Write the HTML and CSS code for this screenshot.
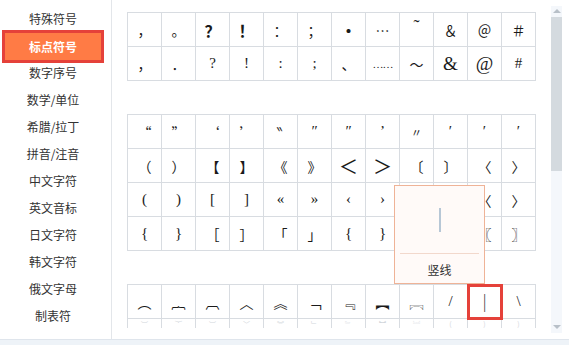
FILE: index.html
```html
<!DOCTYPE html>
<html lang="zh-CN">
<head>
<meta charset="utf-8">
<title>标点符号</title>
<link rel="stylesheet" href="styles.css">
</head>
<body>
<div class="app">
  <div class="top">
    <ul class="sidebar">
      <li class="item">特殊符号</li>
      <li class="item active">标点符号</li>
      <li class="item">数字序号</li>
      <li class="item">数学/单位</li>
      <li class="item">希腊/拉丁</li>
      <li class="item">拼音/注音</li>
      <li class="item">中文字符</li>
      <li class="item">英文音标</li>
      <li class="item">日文字符</li>
      <li class="item">韩文字符</li>
      <li class="item">俄文字母</li>
      <li class="item">制表符</li>
    </ul>
    <div class="main">
      <div class="content">
        <div class="grid">
          <span class="cell cjk">，</span><span class="cell cjk">。</span><span class="cell cjk bold">？</span><span class="cell cjk bold">！</span><span class="cell cjk">：</span><span class="cell cjk">；</span><span class="cell cjk bold">•</span><span class="cell cjk">⋯</span><span class="cell up">˜</span><span class="cell cjk">＆</span><span class="cell cjk">＠</span><span class="cell cjk">＃</span>
          <span class="cell cjk">，</span><span class="cell cjk">．</span><span class="cell">?</span><span class="cell">!</span><span class="cell">:</span><span class="cell">;</span><span class="cell cjk">、</span><span class="cell small">……</span><span class="cell cjk">～</span><span class="cell big">&amp;</span><span class="cell big">@</span><span class="cell">#</span>
        </div>
        <div class="grid">
          <span class="cell cjk">“</span><span class="cell cjk">”</span><span class="cell cjk">‘</span><span class="cell cjk">’</span><span class="cell">‶</span><span class="cell">″</span><span class="cell">″</span><span class="cell">’</span><span class="cell tiny">〃</span><span class="cell">′</span><span class="cell">′</span><span class="cell">′</span>
          <span class="cell cjk">（</span><span class="cell cjk">）</span><span class="cell cjk">【</span><span class="cell cjk">】</span><span class="cell cjk">《</span><span class="cell cjk">》</span><span class="cell cjk big">＜</span><span class="cell cjk big">＞</span><span class="cell cjk">〔</span><span class="cell cjk">〕</span><span class="cell cjk">〈</span><span class="cell cjk">〉</span>
          <span class="cell">(</span><span class="cell">)</span><span class="cell">[</span><span class="cell">]</span><span class="cell">«</span><span class="cell">»</span><span class="cell">‹</span><span class="cell">›</span><span class="cell">⟨</span><span class="cell">⟩</span><span class="cell cjk">〈</span><span class="cell cjk">〉</span>
          <span class="cell">{</span><span class="cell">}</span><span class="cell cjk">［</span><span class="cell cjk">］</span><span class="cell cjk">「</span><span class="cell cjk">」</span><span class="cell">{</span><span class="cell">}</span><span class="cell cjk">『</span><span class="cell cjk">』</span><span class="cell cjk">〖</span><span class="cell cjk">〗</span>
        </div>
        <div class="grid">
          <span class="cell cjk">︵</span><span class="cell cjk">︷</span><span class="cell cjk">︹</span><span class="cell cjk">︿</span><span class="cell cjk">︽</span><span class="cell cjk">﹁</span><span class="cell cjk">﹃</span><span class="cell cjk">︻</span><span class="cell cjk">︗</span><span class="cell">/</span><span class="cell marked">|</span><span class="cell">\</span>
          <span class="cell faint">︶</span><span class="cell faint">︸</span><span class="cell faint">︺</span><span class="cell faint">﹀</span><span class="cell faint">︾</span><span class="cell faint">﹂</span><span class="cell faint">﹄</span><span class="cell faint">︼</span><span class="cell faint">︘</span><span class="cell faint">(</span><span class="cell faint">)</span><span class="cell faint">)</span>
        </div>
      </div>
      <div class="scrollbar">
        <span class="arrow arrow-up"></span>
        <span class="thumb"></span>
        <span class="arrow arrow-down"></span>
      </div>
      <div class="popup">
        <div class="preview"><span class="bar"></span></div>
        <div class="label">竖线</div>
      </div>
    </div>
  </div>
  <div class="bottom"></div>
</div>
</body>
</html>
```

FILE: styles.css
```css
html, body {
  margin: 0;
  padding: 0;
}

body {
  width: 569px;
  height: 345px;
  overflow: hidden;
  background: #ffffff;
  font-family: "Noto Sans CJK SC", "Microsoft YaHei", sans-serif;
  color: #333333;
}

.app {
  display: flex;
  flex-direction: column;
  height: 345px;
}

.top {
  display: flex;
  height: 339px;
}

.sidebar {
  list-style: none;
  margin: 0;
  padding: 5px 0 0;
  width: 112px;
  box-sizing: border-box;
  border-right: 1px solid #e3e6ea;
}

.item {
  height: 27px;
  line-height: 27px;
  margin: 0 10px 0 5px;
  text-align: center;
  font-size: 12px;
  color: #333333;
}

.item.active {
  background: #ff7b45;
  color: #ffffff;
  font-weight: bold;
  outline: 3px solid #e5413a;
  position: relative;
  top: 1px;
}

.main {
  flex: 1;
  position: relative;
  display: flex;
}

.content {
  width: 439px;
  height: 328px;
  overflow: hidden;
  padding: 12px 0 0 15px;
  box-sizing: border-box;
  display: flex;
  flex-direction: column;
  gap: 33px;
}

.grid {
  display: grid;
  grid-template-columns: repeat(12, 34px);
  width: max-content;
  border-top: 1px solid #d8dce1;
  border-left: 1px solid #d8dce1;
  flex: none;
}

.cell {
  height: 34px;
  box-sizing: border-box;
  border-right: 1px solid #d8dce1;
  border-bottom: 1px solid #d8dce1;
  display: flex;
  align-items: center;
  justify-content: center;
  font-family: "Liberation Serif", "Noto Sans CJK SC", serif;
  font-size: 15px;
  color: #1a1a1a;
  background: #ffffff;
}

.cell.cjk {
  font-family: "Noto Sans CJK SC", sans-serif;
  font-size: 14px;
  font-weight: 400;
  color: #1a1a1a;
}

.cell.bold {
  font-weight: 700;
  font-size: 16px;
}

.cell.up {
  align-items: flex-start;
  padding-top: 4px;
  font-size: 18px;
}

.cell.small {
  font-size: 11px;
  letter-spacing: -1px;
}

.cell.tiny {
  font-size: 11px;
}

.cell.big {
  font-size: 19px;
}

.cell.faint {
  font-family: "Noto Sans CJK SC", sans-serif;
  color: #d3d7dc;
  align-items: flex-start;
  font-size: 7px;
  line-height: 7px;
  padding-top: 2px;
}

.cell.marked {
  position: relative;
  z-index: 1;
  outline: 3px solid #e5413a;
  outline-offset: -2px;
  font-family: "DejaVu Sans", sans-serif;
  font-weight: 200;
  font-size: 17px;
  color: #444;
}

.scrollbar {
  width: 11px;
  height: 327px;
  margin-top: 6px;
  background: #f4f7fb;
  position: relative;
  display: flex;
  flex-direction: column;
  align-items: center;
}

.arrow {
  width: 0;
  height: 0;
  border-left: 4px solid transparent;
  border-right: 4px solid transparent;
  flex: none;
}

.arrow-up {
  margin-top: 3px;
  border-bottom: 4px solid #b8c0c8;
}

.thumb {
  width: 11px;
  height: 154px;
  margin-top: 4px;
  background: #d4dadf;
  flex: none;
}

.arrow-down {
  margin-top: auto;
  margin-bottom: 4px;
  border-top: 4px solid #b8c0c8;
}

.popup {
  position: absolute;
  left: 282px;
  top: 185px;
  width: 91px;
  height: 99px;
  box-sizing: border-box;
  background: #fffaf8;
  border: 1px solid #efb397;
  z-index: 2;
  display: flex;
  flex-direction: column;
}

.preview {
  height: 67px;
  margin: 0 5px;
  border-bottom: 1px solid #f2d8cc;
  display: flex;
  align-items: center;
  justify-content: center;
}

.bar {
  display: block;
  width: 2px;
  height: 24px;
  background: #b7c7d6;
}

.label {
  flex: 1;
  display: flex;
  align-items: center;
  justify-content: center;
  font-size: 12px;
  color: #333333;
  padding-top: 1px;
}

.bottom {
  height: 6px;
  box-sizing: border-box;
  background: #eef3f8;
  border-top: 1px solid #dfe5ec;
}
```
